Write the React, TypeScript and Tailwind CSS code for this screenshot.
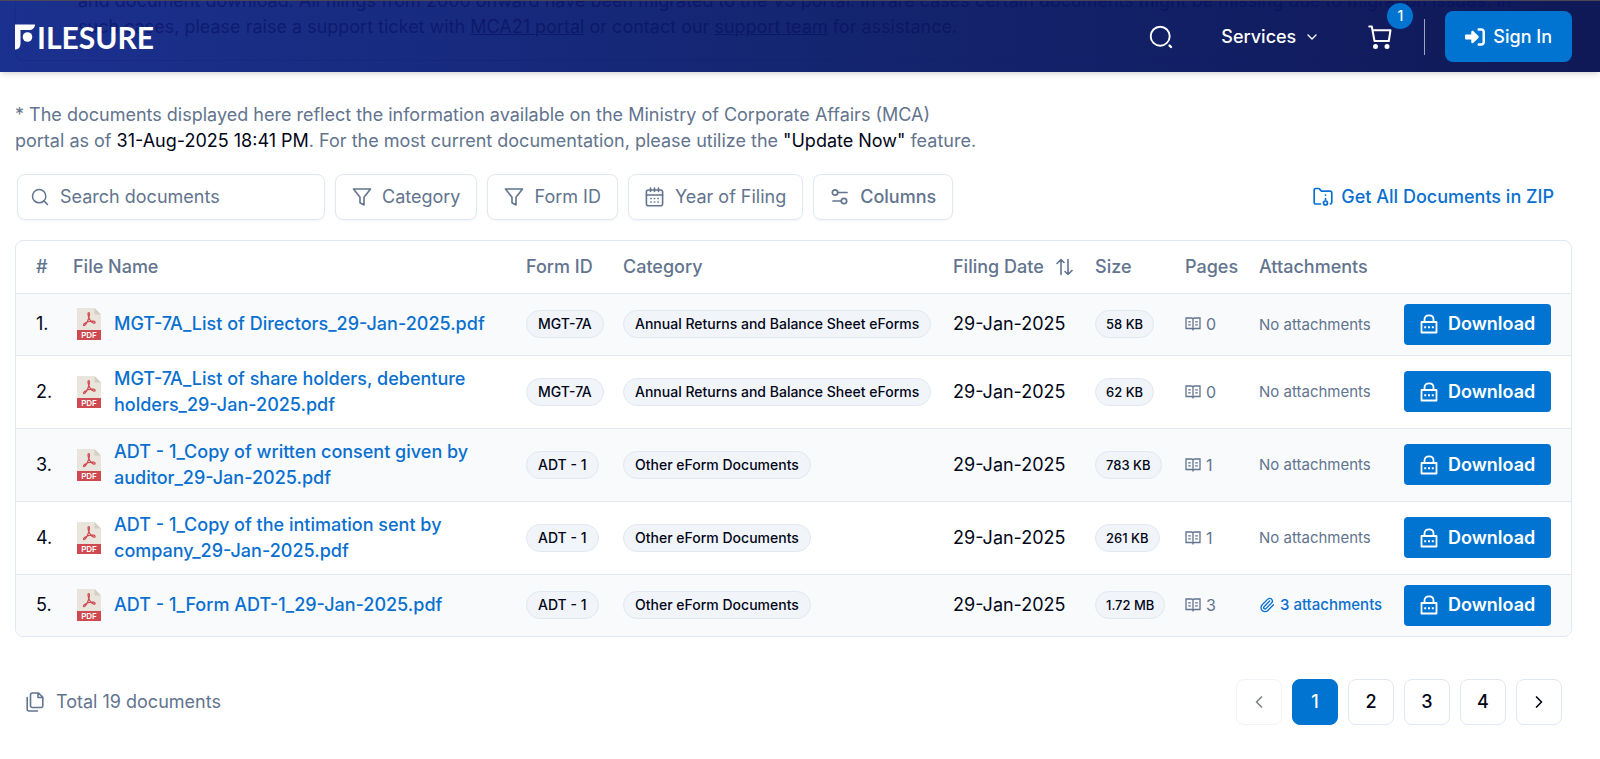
import { useState } from "react";
import { ChevronDown, ChevronLeft, ChevronRight, Paperclip, Search } from "lucide-react";
import { FaRightToBracket } from "react-icons/fa6";

type DocumentRow = {
  id: number;
  name: string;
  formId: string;
  category: string;
  date: string;
  size: string;
  pages: number;
  attachments: number;
};

const documents: DocumentRow[] = [
  {
    id: 1,
    name: "MGT-7A_List of Directors_29-Jan-2025.pdf",
    formId: "MGT-7A",
    category: "Annual Returns and Balance Sheet eForms",
    date: "29-Jan-2025",
    size: "58 KB",
    pages: 0,
    attachments: 0,
  },
  {
    id: 2,
    name: "MGT-7A_List of share holders, debenture holders_29-Jan-2025.pdf",
    formId: "MGT-7A",
    category: "Annual Returns and Balance Sheet eForms",
    date: "29-Jan-2025",
    size: "62 KB",
    pages: 0,
    attachments: 0,
  },
  {
    id: 3,
    name: "ADT - 1_Copy of written consent given by auditor_29-Jan-2025.pdf",
    formId: "ADT - 1",
    category: "Other eForm Documents",
    date: "29-Jan-2025",
    size: "783 KB",
    pages: 1,
    attachments: 0,
  },
  {
    id: 4,
    name: "ADT - 1_Copy of the intimation sent by company_29-Jan-2025.pdf",
    formId: "ADT - 1",
    category: "Other eForm Documents",
    date: "29-Jan-2025",
    size: "261 KB",
    pages: 1,
    attachments: 0,
  },
  {
    id: 5,
    name: "ADT - 1_Form ADT-1_29-Jan-2025.pdf",
    formId: "ADT - 1",
    category: "Other eForm Documents",
    date: "29-Jan-2025",
    size: "1.72 MB",
    pages: 3,
    attachments: 3,
  },
];

const pageNumbers = [1, 2, 3, 4];

const Logo = () => (
  <a href="#" aria-label="Filesure" className="flex items-center gap-[2px] text-white">
    <svg width="20" height="26" viewBox="0 0 20 26" fill="currentColor">
      <path d="M0 0.500H20C20 4 17.500 6 14 6H5.500V19C5.500 23 4 25.500 0 25.500Z" />
      <circle cx="12.500" cy="13" r="4.800" />
    </svg>
    <span className="font-[Lato,sans-serif] text-[30px] leading-none font-bold">ILESURE</span>
  </a>
);

const PdfIcon = () => (
  <svg width="24" height="32" viewBox="0 0 24 32" className="shrink-0">
    <path d="M0 0H17.500L24 6.500V22H0Z" fill="#e9e5dc" />
    <path d="M17.500 0L24 6.500H17.500Z" fill="#d3cfc2" />
    <path
      d="M11.800 4.500C10.600 4.500 10.900 7 11.800 9.500C12.900 12.300 15 14.500 17 15.200C18.600 15.500 18.500 13.500 16.500 13.200C13.500 12.900 9.500 14 7.500 15.500C5.800 16.800 6.500 18.200 7.800 17.200C9.500 15.700 11.300 11.800 12.100 8.500C12.600 6.300 12.700 4.500 11.800 4.500Z"
      fill="none"
      stroke="#cf4a50"
      strokeWidth="1.200"
    />
    <rect y="22" width="24" height="10" fill="#cf4a50" />
    <text x="12" y="29.700" textAnchor="middle" fill="#fff" className="font-[Inter,sans-serif] text-[8px] font-semibold">
      PDF
    </text>
  </svg>
);

const FilterIcon = () => (
  <svg width="20" height="20" viewBox="0 0 20 20" fill="none" stroke="currentColor" strokeWidth="1.600" strokeLinejoin="round">
    <path d="M1.500 2H18.500L12 10.300V18L8 15.800V10.300Z" />
  </svg>
);

const CalendarIcon = () => (
  <svg width="20" height="20" viewBox="0 0 20 20" fill="none" stroke="currentColor" strokeWidth="1.600" strokeLinecap="round">
    <rect x="1.400" y="3" width="16.200" height="15.700" rx="2" />
    <path d="M1.400 8H17.600M5.500 1V4.500M9.500 1V4.500M13.500 1V4.500" />
    <path d="M6 11.500H6.100M9.500 11.500H9.600M13 11.500H13.100M6 15H6.100M9.500 15H9.600M13 15H13.100" strokeWidth="1.700" />
  </svg>
);

const ColumnsIcon = () => (
  <svg width="20" height="20" viewBox="0 0 20 20" fill="none" stroke="currentColor" strokeWidth="1.700" strokeLinecap="round">
    <circle cx="5" cy="5.500" r="2.700" />
    <path d="M8 5.500H17" />
    <circle cx="14" cy="14" r="2.700" />
    <path d="M3 14H11" />
  </svg>
);

const SortIcon = () => (
  <svg width="18" height="20" viewBox="0 0 18 20" fill="none" stroke="currentColor" strokeWidth="1.600" strokeLinecap="round" strokeLinejoin="round">
    <path d="M5 17.500V2.500M1 6.500L5 2.500L8 5.500M12 2.500V17.500M16 13.500L12 17.500L9 14.500" />
  </svg>
);

const ZipIcon = () => (
  <svg width="20" height="20" viewBox="0 0 20 20" fill="none" stroke="currentColor" strokeWidth="1.700" strokeLinecap="round" strokeLinejoin="round">
    <path d="M7.500 17H2.800C1.700 17 1.200 16.500 1.200 15.300V3.200C1.200 2 1.700 1.500 2.800 1.500H6L8.500 4.200H17C18.200 4.200 18.800 4.800 18.800 6V15C18.800 16.200 18.400 16.800 17.500 17" />
    <path d="M12.500 8V8.200M12.500 11.500V13" />
    <circle cx="12.500" cy="16" r="2" />
  </svg>
);

const BookIcon = () => (
  <svg width="16" height="14" viewBox="0 0 16 14" fill="none" stroke="currentColor" strokeWidth="1.300">
    <path d="M1 1H6.500C7.400 1 8 1.500 8 2.300C8 1.500 8.600 1 9.500 1H15V11.500H9.500C8.600 11.500 8 12 8 12.500C8 12 7.400 11.500 6.500 11.500H1ZM8 2.300V13.500" />
    <path d="M3.200 4.800H5.800M3.200 7.800H5.800M10.200 4.800H12.800M10.200 7.800H12.800" />
  </svg>
);

const LockIcon = () => (
  <svg width="18" height="20" viewBox="0 0 18 20" fill="none" stroke="currentColor" strokeWidth="1.800">
    <path d="M1.500 8H16.500V18.500H1.500ZM4.500 8V5.500C4.500 3 6.300 1.300 9 1.300S13.500 3 13.500 5.500V8" strokeLinejoin="round" />
    <path d="M4.200 13.200H6.200M8 13.200H10M11.800 13.200H13.800" strokeWidth="2" />
  </svg>
);

const CopyIcon = () => (
  <svg width="18" height="20" viewBox="0 0 18 20" fill="none" stroke="currentColor" strokeWidth="1.600" strokeLinecap="round" strokeLinejoin="round">
    <path d="M7 1H12.500L16.800 5.300V13.500C16.800 14.700 16.200 15.500 15 15.500H6.500C5.300 15.500 4.500 14.700 4.500 13.500V3C4.500 1.800 5.300 1 6.500 1ZM12 1.500V5.500H16.300" />
    <path d="M1.200 5.500V17C1.200 18.200 1.800 19 3 19H11.500" />
  </svg>
);

const CartIcon = () => (
  <svg width="24" height="24" viewBox="0 0 24 24" fill="none" stroke="currentColor" strokeWidth="2" strokeLinecap="round" strokeLinejoin="round">
    <path d="M1.200 1.500H3.800L6.500 16H20.500M4.600 5.200H22.500L20.800 16" />
    <circle cx="7.500" cy="21.500" r="1.500" fill="currentColor" />
    <circle cx="19" cy="21.500" r="1.500" fill="currentColor" />
  </svg>
);

const Header = () => (
  <header className="relative h-[72px] border-t border-[#4b4658] bg-linear-to-r from-[#1b318f] via-[#142571] to-[#0f1957] shadow-md">
    <div
      aria-hidden="true"
      className="absolute inset-x-[15px] top-0 h-[60px] overflow-hidden rounded-b-lg border-x border-b border-[#101c70]/20"
    >
      <p className="-mt-[13px] pl-[62px] text-lg leading-[26px] whitespace-nowrap text-[#060e60]/60">
        and document download. All filings from 2006 onward have been migrated to the V3 portal. In rare cases certain
        documents might be missing due to migration issues. In
        <br />
        such cases, please raise a support ticket with <span className="underline">MCA21 portal</span> or contact our{" "}
        <span className="underline">support team</span> for assistance.
      </p>
    </div>
    <div className="relative flex h-full items-center justify-between pr-7 pl-[15px]">
      <Logo />
      <div className="flex items-center text-white">
        <button type="button" aria-label="Search">
          <svg width="24" height="24" viewBox="0 0 24 24" fill="none" stroke="currentColor" strokeWidth="1.900" strokeLinecap="round">
            <circle cx="11.200" cy="11.200" r="9.500" />
            <path d="M20.600 20.600L22 22" strokeWidth="2.400" />
          </svg>
        </button>
        <button type="button" className="ml-12 flex items-center gap-2 text-lg font-medium">
          Services
          <ChevronDown size={16} />
        </button>
        <button type="button" aria-label="Cart" className="relative ml-12">
          <CartIcon />
          <span className="absolute -top-[22px] left-[19px] flex size-[26px] items-center justify-center rounded-full bg-[#0074d0] text-sm font-medium">
            1
          </span>
        </button>
        <span className="ml-8 h-9 w-px bg-white/60" />
        <button
          type="button"
          className="ml-5 flex h-[51px] items-center gap-2 rounded-lg bg-[#0074d0] px-5 text-lg font-medium"
        >
          <FaRightToBracket size={20} />
          Sign In
        </button>
      </div>
    </div>
  </header>
);

const filterButton =
  "flex h-[46px] items-center gap-[10px] rounded-lg border border-slate-200 px-4 text-lg text-slate-500 shadow-xs";

const Toolbar = () => (
  <div className="flex items-center justify-between px-[2px]">
    <div className="flex items-center gap-[10px]">
      <label className="flex h-[46px] w-[308px] items-center gap-[10px] rounded-lg border border-slate-200 px-3 text-slate-500 shadow-xs">
        <Search size={20} strokeWidth={1.8} />
        <input
          type="text"
          aria-label="Search documents"
          placeholder="Search documents"
          className="min-w-0 flex-1 bg-transparent text-lg outline-none placeholder:text-slate-500"
        />
      </label>
      <button type="button" className={filterButton}>
        <FilterIcon />
        Category
      </button>
      <button type="button" className={filterButton}>
        <FilterIcon />
        Form ID
      </button>
      <button type="button" className={filterButton}>
        <CalendarIcon />
        Year of Filing
      </button>
      <button type="button" className={`${filterButton} font-medium`}>
        <ColumnsIcon />
        Columns
      </button>
    </div>
    <a href="#" className="mr-4 flex items-center gap-2 text-lg font-medium text-[#0a70cf]">
      <ZipIcon />
      Get All Documents in ZIP
    </a>
  </div>
);

const Pill = ({ small, children }: { small?: boolean; children: React.ReactNode }) => (
  <span
    className={`inline-flex h-7 items-center rounded-full border border-slate-200 bg-slate-100 font-medium whitespace-nowrap ${
      small ? "px-[10px] text-[13px]" : "px-[11px] text-sm"
    }`}
  >
    {children}
  </span>
);

const DocumentsTable = () => (
  <div className="overflow-hidden rounded-lg border border-slate-200">
    <table className="w-full table-fixed text-left text-lg leading-[26px]">
      <colgroup>
        <col className="w-[47px]" />
        <col />
        <col className="w-[97px]" />
        <col className="w-[330px]" />
        <col className="w-[142px]" />
        <col className="w-[90px]" />
        <col className="w-[74px]" />
        <col className="w-[145px]" />
        <col className="w-[177px]" />
      </colgroup>
      <thead>
        <tr className="h-[52px] whitespace-nowrap text-slate-500 [&>th]:px-[10px] [&>th]:font-medium">
          <th>
            <span className="pl-[10px]">#</span>
          </th>
          <th>File Name</th>
          <th>Form ID</th>
          <th>Category</th>
          <th>
            <button type="button" className="flex items-center gap-3">
              Filing Date
              <SortIcon />
            </button>
          </th>
          <th>Size</th>
          <th>Pages</th>
          <th>Attachments</th>
          <th aria-label="Actions" />
        </tr>
      </thead>
      <tbody>
        {documents.map((doc) => (
          <tr key={doc.id} className="border-t border-slate-200 odd:bg-slate-50 [&>td]:px-[10px] [&>td]:py-[10px]">
            <td>
              <span className="pl-[10px]">{doc.id}.</span>
            </td>
            <td>
              <div className="flex items-center gap-[13px] pl-1">
                <PdfIcon />
                <a href="#" className="font-medium text-[#0a70cf]">
                  {doc.name}
                </a>
              </div>
            </td>
            <td>
              <Pill>{doc.formId}</Pill>
            </td>
            <td>
              <Pill>{doc.category}</Pill>
            </td>
            <td className="whitespace-nowrap">{doc.date}</td>
            <td>
              <Pill small>{doc.size}</Pill>
            </td>
            <td>
              <span className="flex items-center gap-[5px] text-base text-slate-500">
                <BookIcon />
                {doc.pages}
              </span>
            </td>
            <td className="whitespace-nowrap">
              {doc.attachments > 0 ? (
                <a href="#" className="flex items-center gap-[5px] text-[15px] font-medium text-[#0a70cf]">
                  <Paperclip size={16} className="shrink-0" />
                  {doc.attachments} attachments
                </a>
              ) : (
                <span className="text-[15px] text-slate-500">No attachments</span>
              )}
            </td>
            <td>
              <button
                type="button"
                className="flex h-[41px] items-center gap-[10px] rounded-sm bg-[#0074d0] px-4 font-semibold text-white"
              >
                <LockIcon />
                Download
              </button>
            </td>
          </tr>
        ))}
      </tbody>
    </table>
  </div>
);

const Pagination = () => {
  const [page, setPage] = useState(1);
  const box = "flex size-[46px] items-center justify-center rounded-lg border text-lg font-medium";

  return (
    <nav aria-label="Pagination" className="flex items-center gap-[10px]">
      <button
        type="button"
        aria-label="Previous page"
        disabled={page === 1}
        onClick={() => setPage(page - 1)}
        className={`${box} border-slate-200 disabled:opacity-50`}
      >
        <ChevronLeft size={20} />
      </button>
      {pageNumbers.map((n) => (
        <button
          key={n}
          type="button"
          onClick={() => setPage(n)}
          className={`${box} ${n === page ? "border-[#0074d0] bg-[#0074d0] text-white" : "border-slate-200"}`}
        >
          {n}
        </button>
      ))}
      <button
        type="button"
        aria-label="Next page"
        disabled={page === 4}
        onClick={() => setPage(page + 1)}
        className={`${box} border-slate-200 disabled:opacity-50`}
      >
        <ChevronRight size={20} />
      </button>
    </nav>
  );
};

const App = () => {
  return (
    <div className="min-h-screen bg-white font-[Inter,sans-serif] text-slate-950">
      <Header />
      <main className="pr-7 pb-8 pl-[15px]">
        <p className="max-w-[1000px] pt-[30px] pb-5 text-lg leading-[26px] text-slate-500">
          * The documents displayed here reflect the information available on the Ministry of Corporate Affairs (MCA)
          <br />
          portal as of <span className="text-slate-950">31-Aug-2025 18:41 PM</span>. For the most current documentation,
          please utilize the <span className="text-slate-950">"Update Now"</span> feature.
        </p>
        <Toolbar />
        <div className="mt-5">
          <DocumentsTable />
        </div>
        <footer className="mt-[42px] flex items-center justify-between pr-[10px] pl-[11px]">
          <div className="flex items-center gap-3 text-lg text-slate-500">
            <CopyIcon />
            Total 19 documents
          </div>
          <Pagination />
        </footer>
      </main>
    </div>
  );
};

export default App;
